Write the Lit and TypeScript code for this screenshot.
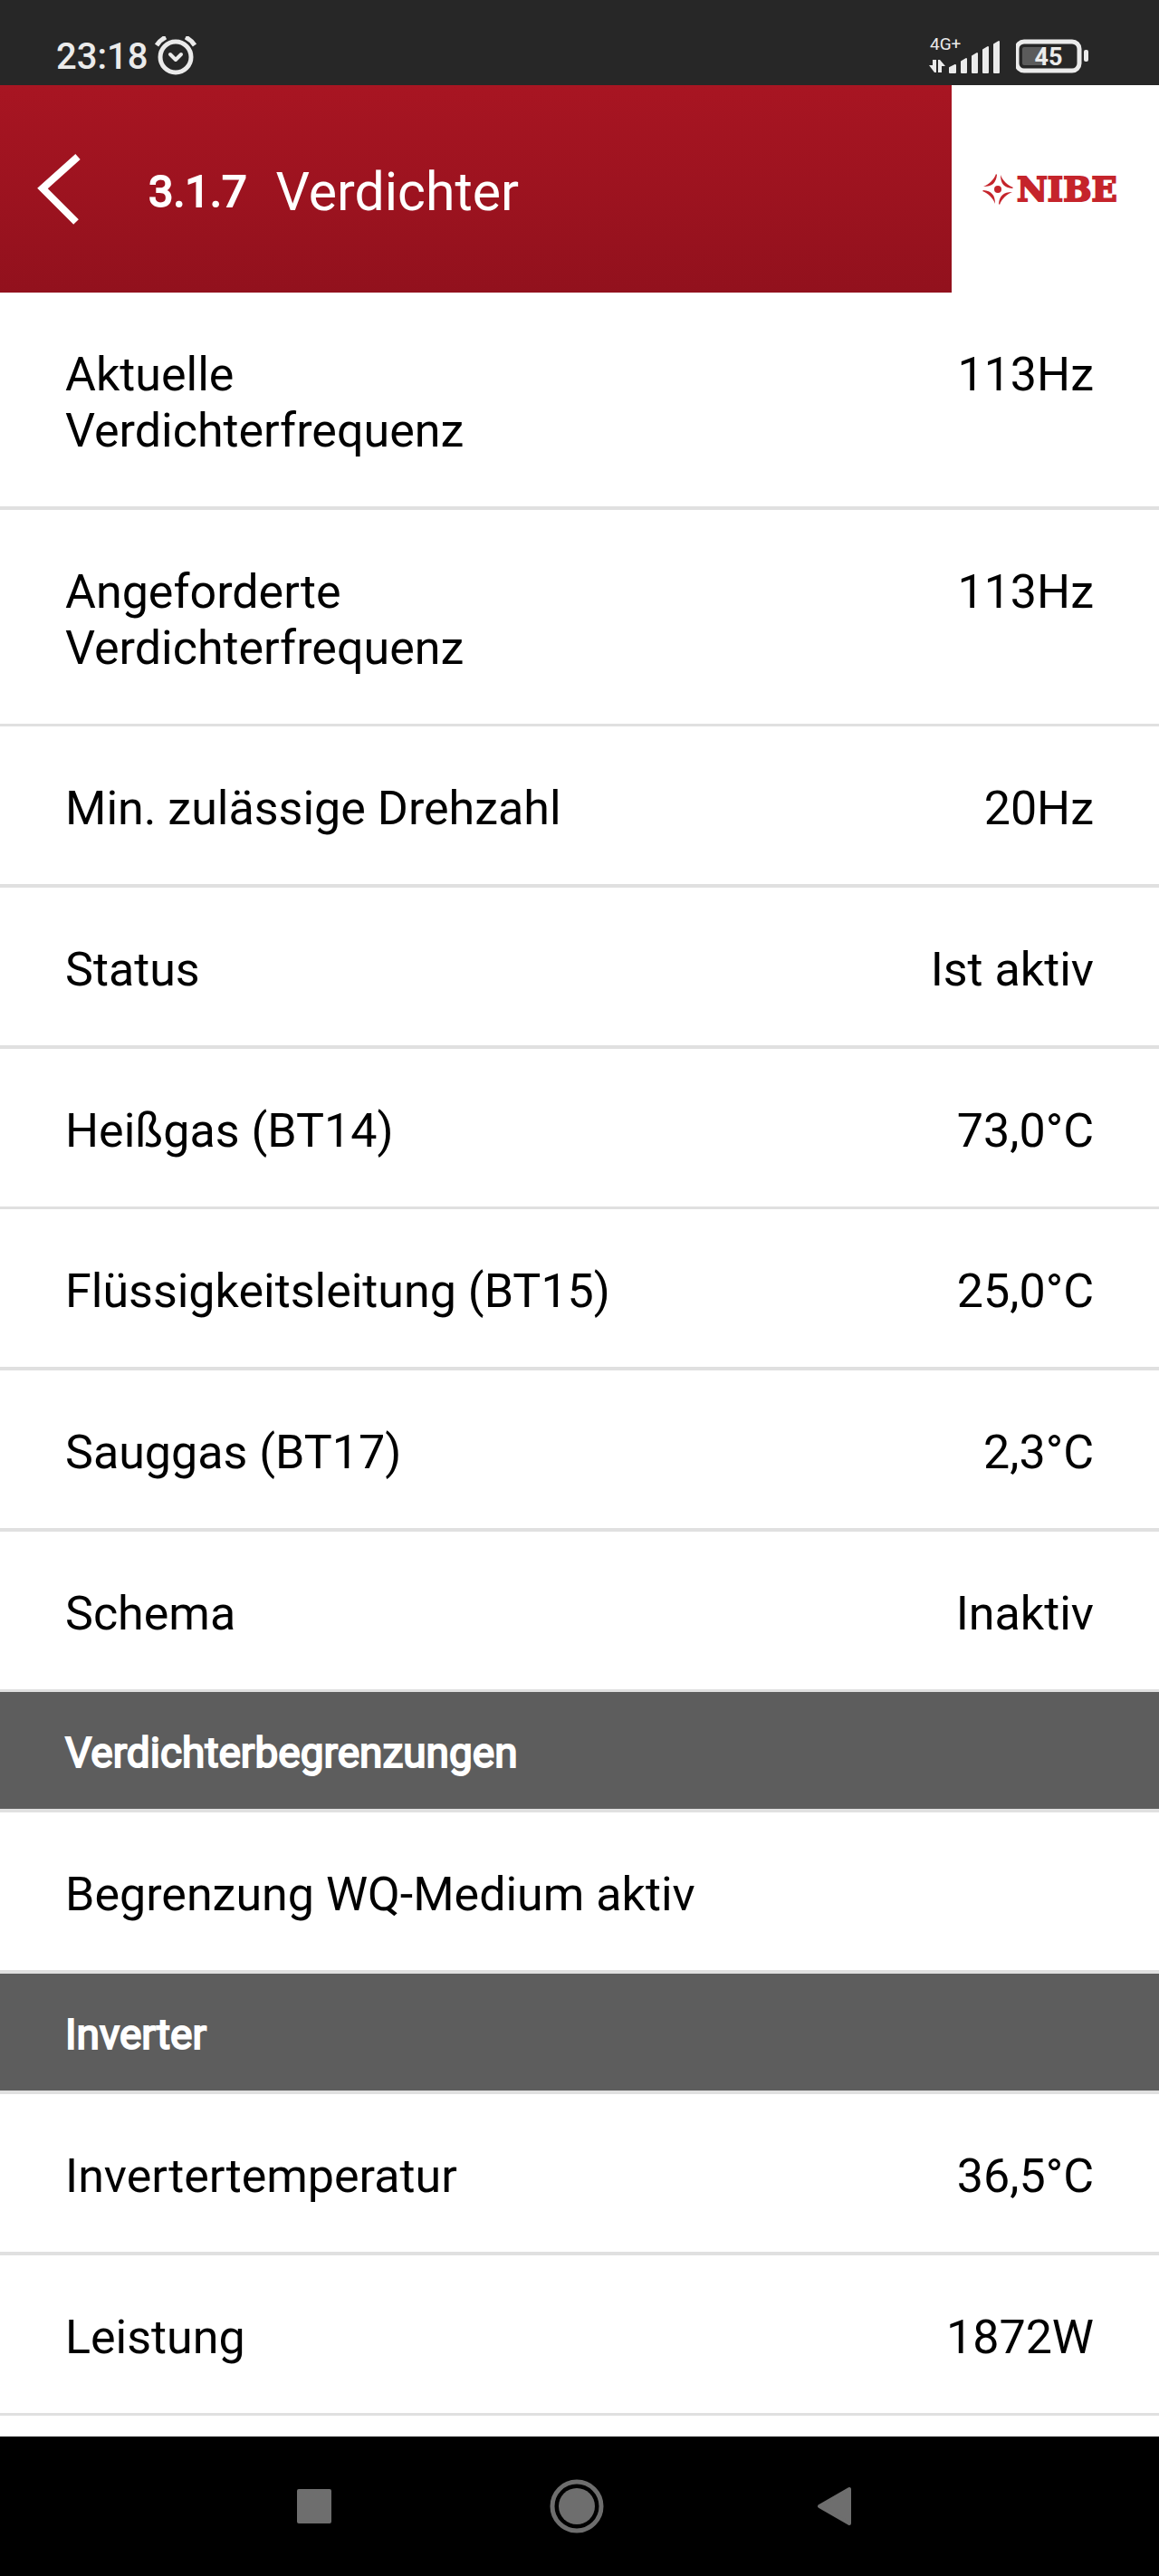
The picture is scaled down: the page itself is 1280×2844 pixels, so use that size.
import { LitElement, html, css, svg } from "lit";
import { customElement, property } from "lit/decorators.js";

interface Reading {
  label: string;
  value?: string;
}

interface Section {
  title?: string;
  rows: Reading[];
}

const SECTIONS: Section[] = [
  {
    rows: [
      { label: "Aktuelle Verdichterfrequenz", value: "113Hz" },
      { label: "Angeforderte Verdichterfrequenz", value: "113Hz" },
      { label: "Min. zulässige Drehzahl", value: "20Hz" },
      { label: "Status", value: "Ist aktiv" },
      { label: "Heißgas (BT14)", value: "73,0°C" },
      { label: "Flüssigkeitsleitung (BT15)", value: "25,0°C" },
      { label: "Sauggas (BT17)", value: "2,3°C" },
      { label: "Schema", value: "Inaktiv" },
    ],
  },
  {
    title: "Verdichterbegrenzungen",
    rows: [{ label: "Begrenzung WQ-Medium aktiv" }],
  },
  {
    title: "Inverter",
    rows: [
      { label: "Invertertemperatur", value: "36,5°C" },
      { label: "Leistung", value: "1872W" },
    ],
  },
];

@customElement("status-bar")
class StatusBar extends LitElement {
  static styles = css`
    :host {
      display: flex;
      align-items: flex-end;
      justify-content: space-between;
      box-sizing: border-box;
      height: 94px;
      padding: 0 76px 8px 62px;
      background: #272727;
      color: #ebebeb;
    }
    .left,
    .right {
      display: flex;
      align-items: center;
    }
    .left {
      gap: 6px;
      height: 46px;
    }
    .right {
      gap: 16px;
      height: 48px;
    }
    .clock {
      font-size: 40px;
      font-weight: 500;
      line-height: 46px;
    }
    svg {
      display: block;
    }
  `;

  render() {
    return html`
      <div class="left">
        <span class="clock">23:18</span>
        <svg width="50" height="46" viewBox="0 0 50 46" fill="none" stroke="#ebebeb" stroke-width="4" aria-hidden="true">
          <circle cx="25" cy="23" r="17" stroke-width="5" />
          <path d="M4 10 Q8 4 14 1 M46 10 Q42 4 36 1" stroke-width="5" />
          <path d="M19 20l6 6 6-6" stroke-linecap="round" stroke-linejoin="round" />
        </svg>
      </div>
      <div class="right">
        <svg width="80" height="48" viewBox="0 0 80 48" fill="#ebebeb" role="img" aria-label="4G+">
          <text x="1" y="17" font-size="19" font-family="Roboto, sans-serif">4G+</text>
          <path d="M8 28v14H6L0 34h4v-6z M10 42V28h2l6 7h-4v7z" />
          <path
            stroke="#ebebeb"
            stroke-width="2"
            stroke-linejoin="round"
            d="M23 42v-5l6-3v8z M36 42V30l5-3v15z M48 42V24l5-3v21z M60 42V17l5-3v28z M72 42V11l5-3v34z"
          />
        </svg>
        <svg width="82" height="48" viewBox="0 0 82 48" role="img" aria-label="45%">
          <rect x="1" y="8" width="69" height="32" rx="8" fill="none" stroke="#ebebeb" stroke-width="5" />
          <rect x="7" y="14" width="26" height="20" rx="2" fill="#5b5b5b" />
          <rect x="75" y="17" width="5" height="13" rx="2" fill="#ebebeb" />
          <text x="36" y="34" text-anchor="middle" font-size="27" font-weight="700" font-family="Roboto, sans-serif" fill="#ebebeb">45</text>
        </svg>
      </div>
    `;
  }
}

@customElement("title-bar")
class TitleBar extends LitElement {
  @property() number = "";
  @property() heading = "";

  static styles = css`
    :host {
      display: flex;
      height: 229px;
      color: #fff;
    }
    .bar {
      display: flex;
      flex: 1;
      align-items: center;
      background: linear-gradient(#a81522, #92111d);
    }
    .back {
      padding: 0;
      border: 0;
      background: none;
      width: 164px;
      height: 100%;
    }
    .back svg {
      display: block;
      margin-left: 40px;
    }
    .title {
      display: flex;
      align-items: center;
      gap: 32px;
      margin: 0;
      padding-top: 6px;
      font-size: 59px;
      font-weight: 400;
      line-height: 70px;
    }
    .number {
      font-size: 49px;
      -webkit-text-stroke: 2px currentColor;
    }
    .brand {
      display: flex;
      align-items: center;
      box-sizing: border-box;
      width: 229px;
      padding-left: 34px;
      background: #fff;
    }
  `;

  render() {
    const blade = "M15 0 C13 6 7 12 1 14 C11 14 15 10 16 1z";
    return html`
      <div class="bar">
        <button class="back" type="button" aria-label="Zurück">
          <svg width="50" height="80" viewBox="0 0 50 80" fill="none" stroke="#fff" stroke-width="8">
            <path d="M46 4 L7 39 L44 76" />
          </svg>
        </button>
        <h1 class="title"><span class="number">${this.number}</span><span>${this.heading}</span></h1>
      </div>
      <div class="brand">
        <svg width="170" height="44" viewBox="0 -5 170 44" fill="#c5242b" role="img" aria-label="NIBE">
          ${[0, 90, 180, 270].map((a) => svg`<path transform="rotate(${a} 17 17)" d=${blade} />`)}
          <circle cx="17" cy="17" r="4" />
          <text x="38" y="30" font-size="37" font-weight="700" font-family="'DejaVu Serif', serif" stroke="#c5242b" stroke-width="2">NIBE</text>
        </svg>
      </div>
    `;
  }
}

@customElement("nav-bar")
class NavBar extends LitElement {
  static styles = css`
    :host {
      display: flex;
      align-items: center;
      justify-content: center;
      gap: 210px;
      height: 154px;
      padding-right: 6px;
      background: #000;
    }
    .key {
      display: flex;
      align-items: center;
      justify-content: center;
      width: 80px;
      height: 80px;
      padding: 0;
      border: 0;
      background: none;
    }
  `;

  render() {
    return html`
      <button class="key" type="button" aria-label="Übersicht">
        <svg width="60" height="60" viewBox="0 0 60 60" fill="#6e6e6e"><rect x="11" y="11" width="38" height="38" rx="2" /></svg>
      </button>
      <button class="key" type="button" aria-label="Startseite">
        <svg width="60" height="60" viewBox="0 0 60 60" fill="#6e6e6e">
          <circle cx="30" cy="30" r="20" />
          <circle cx="30" cy="30" r="27" fill="none" stroke="#6e6e6e" stroke-width="5" />
        </svg>
      </button>
      <button class="key" type="button" aria-label="Zurück">
        <svg width="60" height="60" viewBox="0 0 60 60" fill="#6e6e6e" stroke="#6e6e6e" stroke-width="4" stroke-linejoin="round">
          <path d="M8 30 L41 11 V49z" />
        </svg>
      </button>
    `;
  }
}

@customElement("app-root")
class AppRoot extends LitElement {
  static styles = css`
    :host {
      display: flex;
      flex-direction: column;
      min-height: 100vh;
      background: #fff;
      color: #000;
      font-family: Roboto, sans-serif;
    }
    main {
      flex: 1;
    }
    .list {
      margin: 0;
    }
    .row {
      display: flex;
      justify-content: space-between;
      gap: 40px;
      padding: 60px 72px 52px;
      border-bottom: 4px solid #e0e0e0;
      font-size: 52px;
      line-height: 62px;
    }
    .row:nth-child(3n + 2) {
      border-bottom-width: 3px;
    }
    .label.narrow {
      max-width: 620px;
    }
    .value {
      margin: 0;
      white-space: nowrap;
    }
    .section {
      margin: 0;
      padding: 37px 72px 32px;
      border-bottom: 4px solid #e0e0e0;
      background: #5d5d5d;
      color: #fff;
      font-size: 46px;
      font-weight: 400;
      line-height: 60px;
      -webkit-text-stroke: 2px currentColor;
    }
  `;

  render() {
    return html`
      <status-bar></status-bar>
      <title-bar number="3.1.7" heading="Verdichter"></title-bar>
      <main>
        ${SECTIONS.map(
          (s) => html`
            ${s.title ? html`<h2 class="section">${s.title}</h2>` : null}
            <dl class="list">
              ${s.rows.map(
                (r) => html`<div class="row">
                  <dt class="label ${r.value ? "narrow" : ""}">${r.label}</dt>
                  ${r.value ? html`<dd class="value">${r.value}</dd>` : null}
                </div>`,
              )}
            </dl>
          `,
        )}
      </main>
      <nav-bar></nav-bar>
    `;
  }
}
